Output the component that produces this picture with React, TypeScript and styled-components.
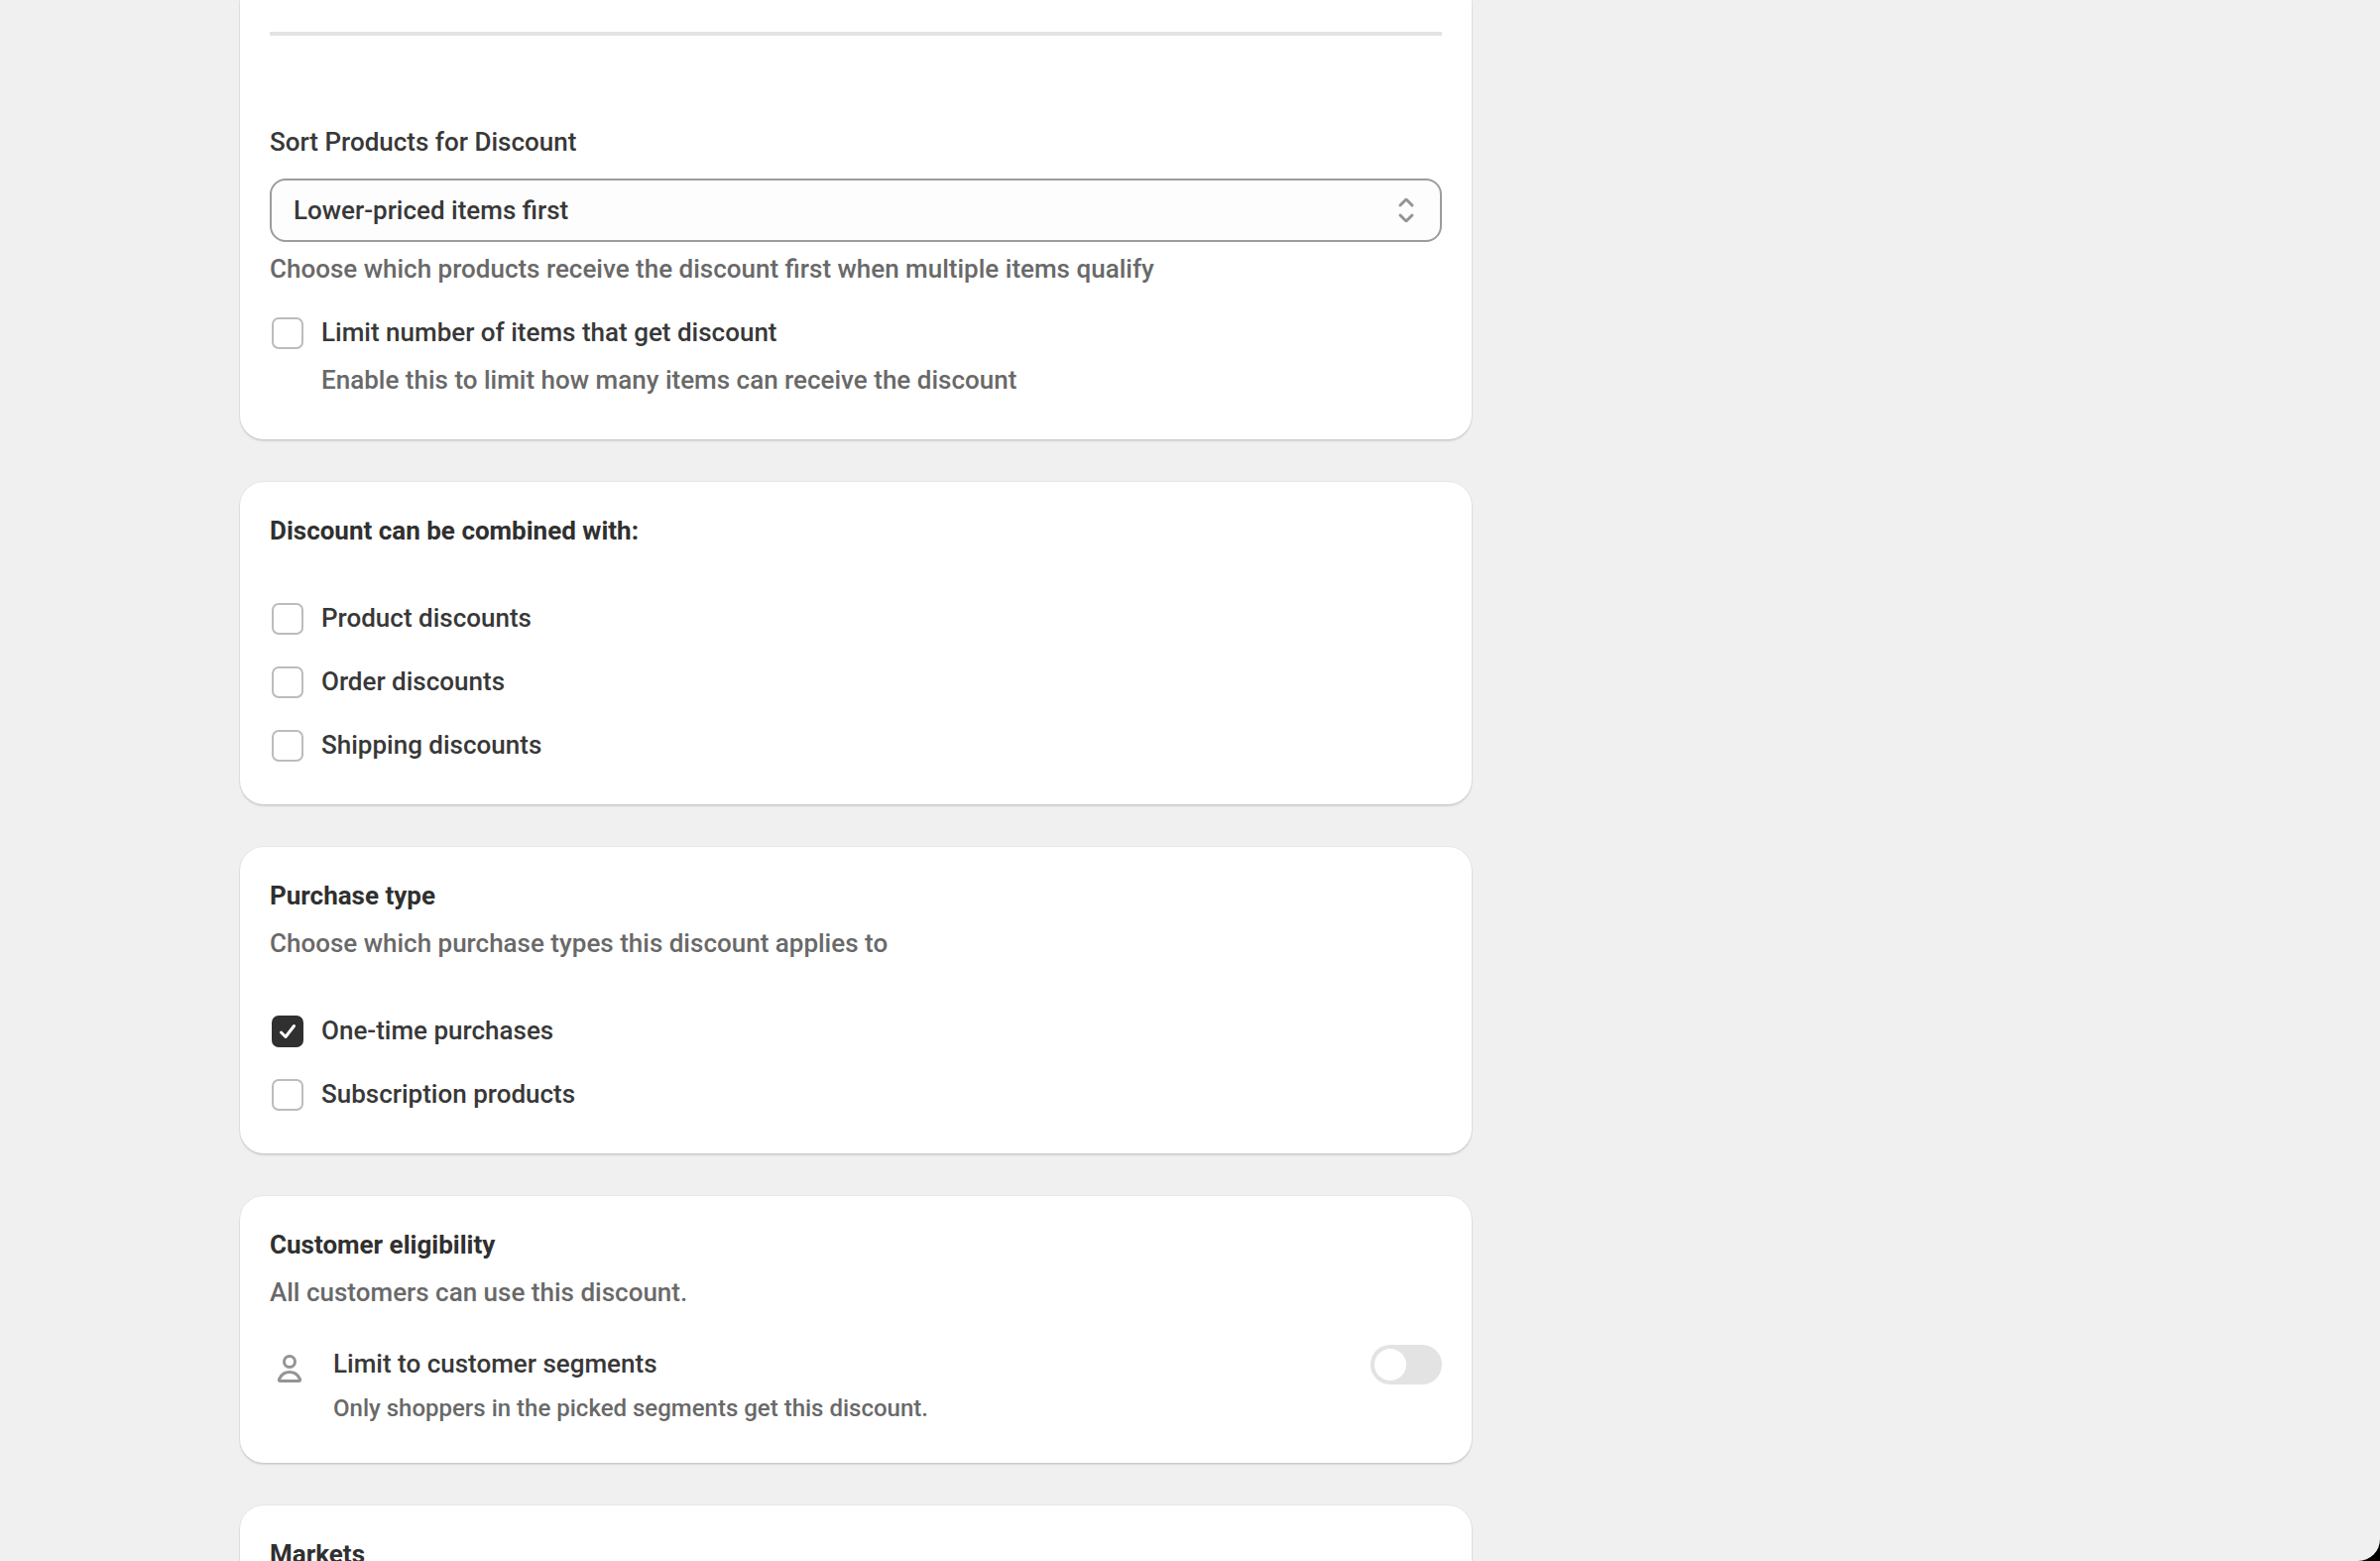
import React, { useId, useState } from "react";
import styled, { createGlobalStyle } from "styled-components";

const GlobalStyle = createGlobalStyle`
  *, *::before, *::after { box-sizing: border-box; }
  body {
    margin: 0;
    background: #000;
    color: #383838;
    font-family: Roboto, "Liberation Sans", sans-serif;
    font-size: 26px;
    font-weight: 500;
    line-height: 36px;
  }
`;

const Screen = styled.div`
  height: 100vh;
  overflow: hidden auto;
  scrollbar-width: none;
  background: #f0f0f0;
  border-bottom-right-radius: 22px;
`;

const Page = styled.div`
  display: grid;
  grid-template-columns: minmax(0, 69fr) minmax(0, 35fr);
  gap: 44px;
  padding: 0 242px;
`;

const Main = styled.main`
  display: flex;
  flex-direction: column;
  gap: 43px;
`;

const Card = styled.section<{ $continued?: boolean }>`
  display: flex;
  flex-direction: column;
  padding: ${(p) => (p.$continued ? "32px 30px 30px" : "31px 30px")};
  background: #fff;
  border-radius: ${(p) => (p.$continued ? "0 0 24px 24px" : "24px")};
  box-shadow: 0 0 0 1px rgba(0, 0, 0, 0.04), 0 2px 2px rgba(0, 0, 0, 0.12);
`;

const Divider = styled.hr`
  width: 100%;
  height: 4px;
  margin: 0 0 89px;
  border: 0;
  background: #e3e3e3;
`;

const Heading = styled.h2`
  margin: 0;
  color: #303030;
  font-size: 26px;
  line-height: 36px;
  font-weight: 700;
`;

const Description = styled.p`
  margin: 12px 0 0;
  color: #696969;
`;

const FieldLabel = styled.label`
  margin-bottom: 19px;
`;

const SelectBox = styled.div`
  display: grid;
  align-items: center;
  > * { grid-area: 1 / 1; }
  > svg {
    justify-self: end;
    margin-right: 16px;
    pointer-events: none;
  }
`;

const Select = styled.select`
  appearance: none;
  width: 100%;
  height: 64px;
  padding: 0 64px 0 22px;
  border: 2px solid #9c9c9c;
  border-radius: 16px;
  background: #fdfdfd;
  color: inherit;
  font: inherit;
`;

const FieldHelp = styled.p`
  margin: 9px 0 19px;
  color: #696969;
`;

const ChoiceList = styled.div`
  display: flex;
  flex-direction: column;
  gap: 8px;
  margin-top: 43px;
`;

const ChoiceRow = styled.div`
  display: flex;
  align-items: flex-start;
  gap: 18px;
  padding: 10px 0 12px 2px;
`;

const CheckSlot = styled.span`
  display: grid;
  place-items: center;
  margin-top: 2px;
  > * { grid-area: 1 / 1; }
  > svg { pointer-events: none; }
`;

const Checkbox = styled.input`
  appearance: none;
  width: 32px;
  height: 32px;
  margin: 0;
  border: 2px solid #bcbcbc;
  border-radius: 7px;
  background: #fff;
  &:checked {
    border-color: #303030;
    background: #303030;
  }
`;

const ChoiceText = styled.div`
  display: flex;
  flex-direction: column;
  gap: 13px;
`;

const ChoiceLabel = styled.label`
  line-height: 34px;
`;

const ChoiceHelp = styled.span`
  color: #696969;
`;

const SettingRow = styled.div`
  display: flex;
  align-items: flex-start;
  gap: 24px;
  margin-top: 27px;
  padding: 8px 0;
  > svg { margin-top: 4px; }
`;

const SettingText = styled.div`
  display: flex;
  flex: 1;
  flex-direction: column;
  gap: 11px;
  padding-top: 1px;
`;

const SettingHelp = styled.span`
  color: #696969;
  font-size: 24px;
  line-height: 32px;
`;

const Toggle = styled.input`
  appearance: none;
  display: flex;
  width: 72px;
  height: 40px;
  margin: 0;
  padding: 4px;
  border-radius: 20px;
  background: #e3e3e3;
  &::before {
    content: "";
    width: 32px;
    height: 32px;
    border-radius: 50%;
    background: #fff;
  }
  &:checked {
    justify-content: flex-end;
    background: #303030;
  }
`;

const SelectIcon = () => (
  <svg width="40" height="40" viewBox="0 0 20 20" fill="#949494" aria-hidden="true">
    <path d="M10.884 4.323a1.25 1.25 0 0 0-1.768 0l-2.646 2.647a.75.75 0 0 0 1.06 1.06l2.47-2.47 2.47 2.47a.75.75 0 1 0 1.06-1.06z" />
    <path d="m13.53 13.03-2.646 2.647a1.25 1.25 0 0 1-1.768 0l-2.646-2.647a.75.75 0 0 1 1.06-1.06l2.47 2.47 2.47-2.47a.75.75 0 0 1 1.06 1.06" />
  </svg>
);

const PersonIcon = () => (
  <svg width="40" height="40" viewBox="0 0 20 20" fill="#949494" fillRule="evenodd" aria-hidden="true">
    <path d="M10 3a3.5 3.5 0 1 0 0 7 3.5 3.5 0 0 0 0-7m-2 3.5a2 2 0 1 1 4 0 2 2 0 0 1-4 0" />
    <path d="M15.484 14.227a6.274 6.274 0 0 0-10.968 0l-.437.786a1.338 1.338 0 0 0 1.17 1.987h9.502a1.338 1.338 0 0 0 1.17-1.987zm-9.657.728a4.773 4.773 0 0 1 8.346 0l.302.545h-8.95z" />
  </svg>
);

const CheckIcon = () => (
  <svg width="32" height="32" viewBox="0 0 32 32" fill="none" stroke="#fff" strokeWidth="3" strokeLinecap="round" strokeLinejoin="round" aria-hidden="true">
    <path d="m9.500 17 4.500 4.500 8.500-11" />
  </svg>
);

type ChoiceProps = { label: string; help?: string; initial?: boolean };

function Choice({ label, help, initial = false }: ChoiceProps) {
  const id = useId();
  const [checked, setChecked] = useState(initial);
  return (
    <ChoiceRow>
      <CheckSlot>
        <Checkbox
          id={id}
          type="checkbox"
          checked={checked}
          aria-describedby={help ? `${id}-help` : undefined}
          onChange={(e) => setChecked(e.target.checked)}
        />
        {checked && <CheckIcon />}
      </CheckSlot>
      <ChoiceText>
        <ChoiceLabel htmlFor={id}>{label}</ChoiceLabel>
        {help && <ChoiceHelp id={`${id}-help`}>{help}</ChoiceHelp>}
      </ChoiceText>
    </ChoiceRow>
  );
}

export default function App() {
  return (
    <>
      <GlobalStyle />
      <Screen>
        <Page>
          <Main>
            <Card $continued>
              <Divider />
              <FieldLabel htmlFor="sort-products">Sort Products for Discount</FieldLabel>
              <SelectBox>
                <Select id="sort-products" aria-describedby="sort-help">
                  <option>Lower-priced items first</option>
                </Select>
                <SelectIcon />
              </SelectBox>
              <FieldHelp id="sort-help">
                Choose which products receive the discount first when multiple items qualify
              </FieldHelp>
              <Choice
                label="Limit number of items that get discount"
                help="Enable this to limit how many items can receive the discount"
              />
            </Card>

            <Card>
              <Heading>Discount can be combined with:</Heading>
              <ChoiceList>
                <Choice label="Product discounts" />
                <Choice label="Order discounts" />
                <Choice label="Shipping discounts" />
              </ChoiceList>
            </Card>

            <Card>
              <Heading>Purchase type</Heading>
              <Description>Choose which purchase types this discount applies to</Description>
              <ChoiceList>
                <Choice label="One-time purchases" initial />
                <Choice label="Subscription products" />
              </ChoiceList>
            </Card>

            <Card>
              <Heading>Customer eligibility</Heading>
              <Description>All customers can use this discount.</Description>
              <SettingRow>
                <PersonIcon />
                <SettingText>
                  <label htmlFor="limit-segments">Limit to customer segments</label>
                  <SettingHelp id="segments-help">
                    Only shoppers in the picked segments get this discount.
                  </SettingHelp>
                </SettingText>
                <Toggle id="limit-segments" type="checkbox" role="switch" aria-describedby="segments-help" />
              </SettingRow>
            </Card>

            <Card>
              <Heading>Markets</Heading>
            </Card>
          </Main>
        </Page>
      </Screen>
    </>
  );
}
